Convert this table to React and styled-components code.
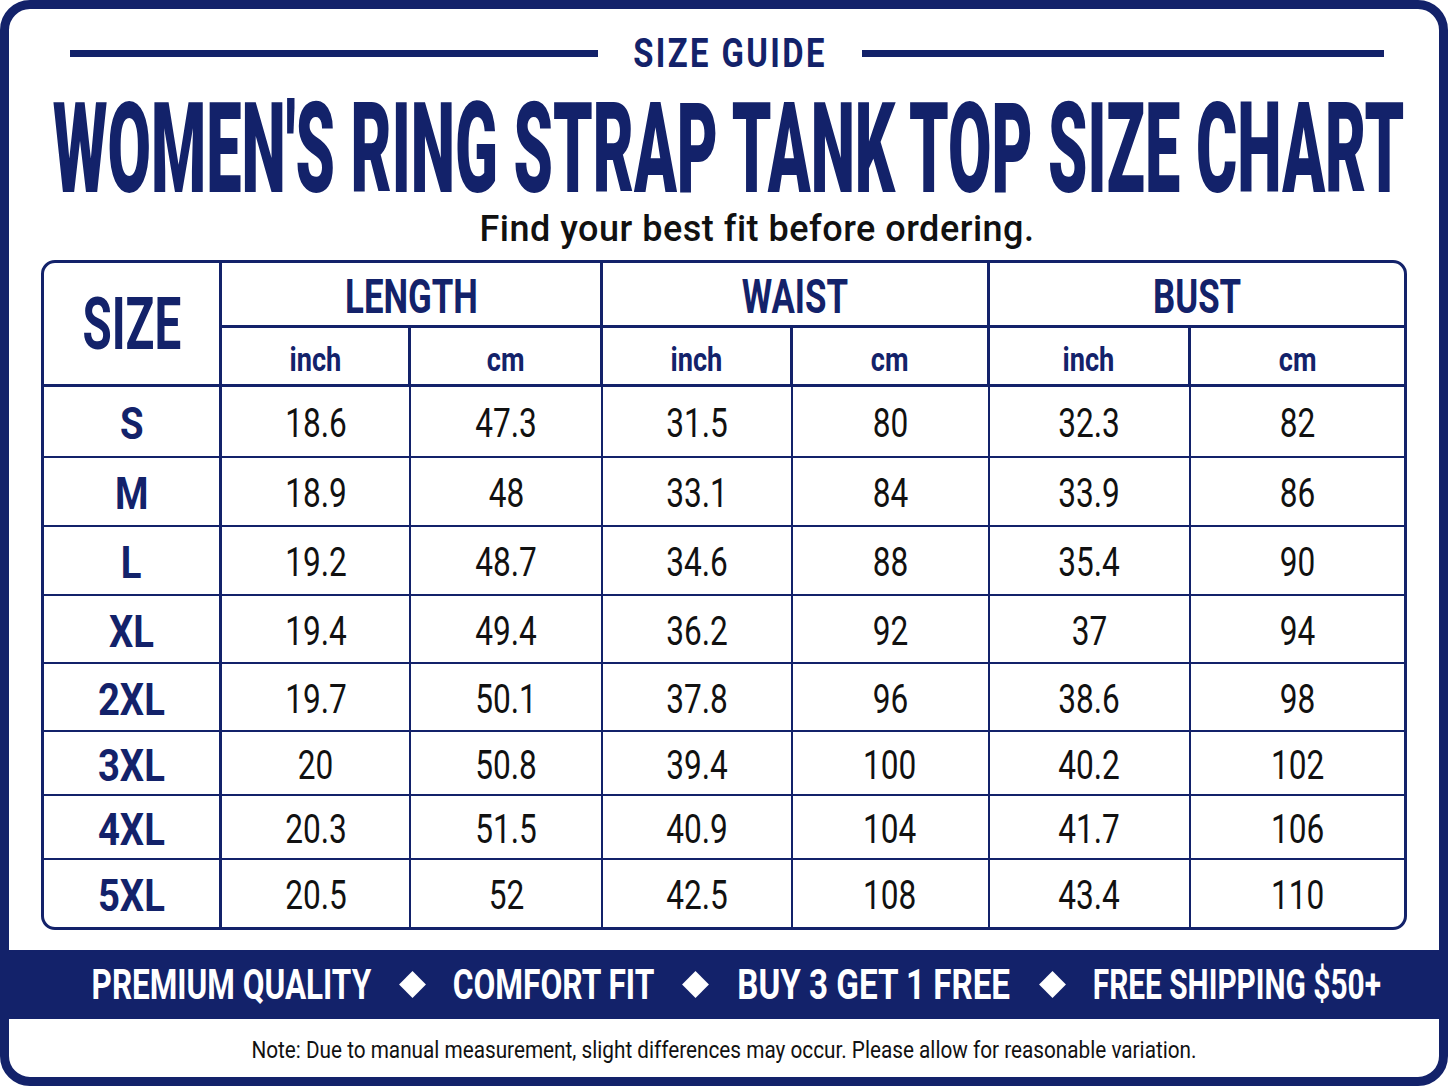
import React from 'react';
import styled, { createGlobalStyle } from 'styled-components';

const NAVY = '#13226a';
const INK = '#111111';

const GlobalStyle = createGlobalStyle`
    html, body {
        margin: 0;
        padding: 0;
        background: #ffffff;
        overflow: hidden;
        font-family: Roboto, "Liberation Sans", Arial, sans-serif;
    }
`;

const rows = [
    ['S', '18.6', '47.3', '31.5', '80', '32.3', '82'],
    ['M', '18.9', '48', '33.1', '84', '33.9', '86'],
    ['L', '19.2', '48.7', '34.6', '88', '35.4', '90'],
    ['XL', '19.4', '49.4', '36.2', '92', '37', '94'],
    ['2XL', '19.7', '50.1', '37.8', '96', '38.6', '98'],
    ['3XL', '20', '50.8', '39.4', '100', '40.2', '102'],
    ['4XL', '20.3', '51.5', '40.9', '104', '41.7', '106'],
    ['5XL', '20.5', '52', '42.5', '108', '43.4', '110'],
];

const groups = ['LENGTH', 'WAIST', 'BUST'];

const perks = [
    { label: 'PREMIUM QUALITY', width: 278, squeeze: 0.75 },
    { label: 'COMFORT FIT', width: 199, squeeze: 0.755 },
    { label: 'BUY 3 GET 1 FREE', width: 273, squeeze: 0.79 },
    { label: 'FREE SHIPPING $50+', width: 285, squeeze: 0.71 },
];

function App() {
    return (
        <>
            <GlobalStyle />
            <Frame>
                <GuideRow>
                    <Rule />
                    <Kicker><Squeeze $x={0.8}>SIZE GUIDE</Squeeze></Kicker>
                    <Rule />
                </GuideRow>
                <Title><Squeeze $x={0.5}>WOMEN'S RING STRAP TANK TOP SIZE CHART</Squeeze></Title>
                <Subtitle><Squeeze $x={1}>Find your best fit before ordering.</Squeeze></Subtitle>

                <Table>
                    <SizeHead $rows={2}><Squeeze $x={0.66}>SIZE</Squeeze></SizeHead>
                    {groups.map((g, i) => (
                        <GroupHead key={g} $cols={2} $end={i === groups.length - 1}>
                            <Squeeze $x={0.71}>{g}</Squeeze>
                        </GroupHead>
                    ))}
                    {groups.map((g, i) => (
                        <React.Fragment key={g + '-units'}>
                            <UnitHead><Squeeze $x={0.8}>inch</Squeeze></UnitHead>
                            <UnitHead $end={i === groups.length - 1}><Squeeze $x={0.8}>cm</Squeeze></UnitHead>
                        </React.Fragment>
                    ))}
                    {rows.map((row, r) => (
                        <React.Fragment key={row[0]}>
                            <SizeCell $last={r === rows.length - 1}>
                                <Squeeze $x={0.85}>{row[0]}</Squeeze>
                            </SizeCell>
                            {row.slice(1).map((v, c) => (
                                <ValueCell key={c} $last={r === rows.length - 1} $end={c === 5}>
                                    <Squeeze $x={0.79}>{v}</Squeeze>
                                </ValueCell>
                            ))}
                        </React.Fragment>
                    ))}
                </Table>

                <Banner>
                    {perks.map((p, i) => (
                        <React.Fragment key={p.label}>
                            {i > 0 ? <Diamond /> : null}
                            <Perk $w={p.width}><Squeeze $x={p.squeeze}>{p.label}</Squeeze></Perk>
                        </React.Fragment>
                    ))}
                </Banner>

                <Note>
                    <Squeeze $x={0.864}>Note: Due to manual measurement, slight differences may occur. Please allow for reasonable variation.</Squeeze>
                </Note>
            </Frame>
        </>
    );
}

const Frame = styled.main`
    width: 1448px;
    height: 1086px;
    box-sizing: border-box;
    border: 9px solid ${NAVY};
    border-radius: 30px;
    overflow: hidden;
    background: #ffffff;
    display: flex;
    flex-direction: column;
`;

const Squeeze = styled.span`
    display: inline-block;
    white-space: nowrap;
    transform: scaleX(${p => p.$x});
    transform-origin: center;
`;

const GuideRow = styled.div`
    height: 88px;
    flex: none;
    display: grid;
    grid-template-columns: 528px 264px 522px;
    align-items: center;
    padding-left: 61px;
`;

const Rule = styled.div`
    height: 7px;
    background: ${NAVY};
`;

const Kicker = styled.div`
    display: flex;
    justify-content: center;
    font-size: 41px;
    font-weight: 700;
    letter-spacing: 3px;
    line-height: 1;
    color: ${NAVY};
`;

const Title = styled.h1`
    margin: 0;
    height: 104px;
    flex: none;
    display: flex;
    justify-content: center;
    padding-left: 10px;
    font-size: 126px;
    line-height: 104px;
    font-weight: 900;
    color: ${NAVY};
`;

const Subtitle = styled.p`
    margin: 0;
    height: 55px;
    flex: none;
    display: flex;
    align-items: center;
    justify-content: center;
    padding-left: 66px;
    font-size: 36px;
    line-height: 44px;
    font-weight: 500;
    letter-spacing: 0.5px;
    color: ${INK};
`;

const Table = styled.div`
    margin: 4px 32px 0;
    height: 670px;
    flex: none;
    box-sizing: border-box;
    border: 3px solid ${NAVY};
    border-radius: 14px;
    overflow: hidden;
    display: grid;
    grid-template-columns: 178fr 189fr 192fr 189fr 197fr 201fr 213fr;
    grid-template-rows: 65px 59px 71px 69px 69px 68px 68px 64px 64px 1fr;
`;

const Cell = styled.div`
    display: flex;
    align-items: center;
    justify-content: center;
    overflow: visible;
    box-sizing: border-box;
    grid-column: span ${p => p.$cols || 1};
    grid-row: span ${p => p.$rows || 1};
    border-right: ${p => (p.$end ? 'none' : `3px solid ${NAVY}`)};
    border-bottom: 3px solid ${NAVY};
`;

const SizeHead = styled(Cell)`
    font-size: 72px;
    font-weight: 700;
    color: ${NAVY};
    padding-top: 2px;
`;

const GroupHead = styled(Cell)`
    font-size: 49px;
    font-weight: 700;
    color: ${NAVY};
    padding-top: 4px;
`;

const UnitHead = styled(Cell)`
    font-size: 34px;
    font-weight: 700;
    color: ${NAVY};
    padding-top: 5px;
`;

const BodyCell = styled(Cell)`
    border-right-width: 2px;
    border-bottom: ${p => (p.$last ? 'none' : `2px solid ${NAVY}`)};
    padding-top: 4px;
`;

const SizeCell = styled(BodyCell)`
    border-right-width: 3px;
    font-size: 45px;
    font-weight: 700;
    color: ${NAVY};
`;

const ValueCell = styled(BodyCell)`
    font-size: 40px;
    font-weight: 400;
    color: ${INK};
`;

const Banner = styled.div`
    margin-top: 20px;
    height: 69px;
    flex: none;
    background: ${NAVY};
    display: flex;
    align-items: center;
    gap: 28px;
    padding-left: 83px;
`;

const Perk = styled.div`
    width: ${p => p.$w}px;
    display: flex;
    justify-content: center;
    font-size: 42px;
    font-weight: 700;
    color: #ffffff;
    line-height: 1;
`;

const Diamond = styled.span`
    width: 19px;
    height: 19px;
    margin: 0 4.5px;
    background: #ffffff;
    transform: rotate(45deg);
`;

const Note = styled.div`
    flex: 1;
    display: flex;
    align-items: center;
    justify-content: center;
    padding-top: 3px;
    font-size: 24px;
    color: ${INK};
`;

export default App;
